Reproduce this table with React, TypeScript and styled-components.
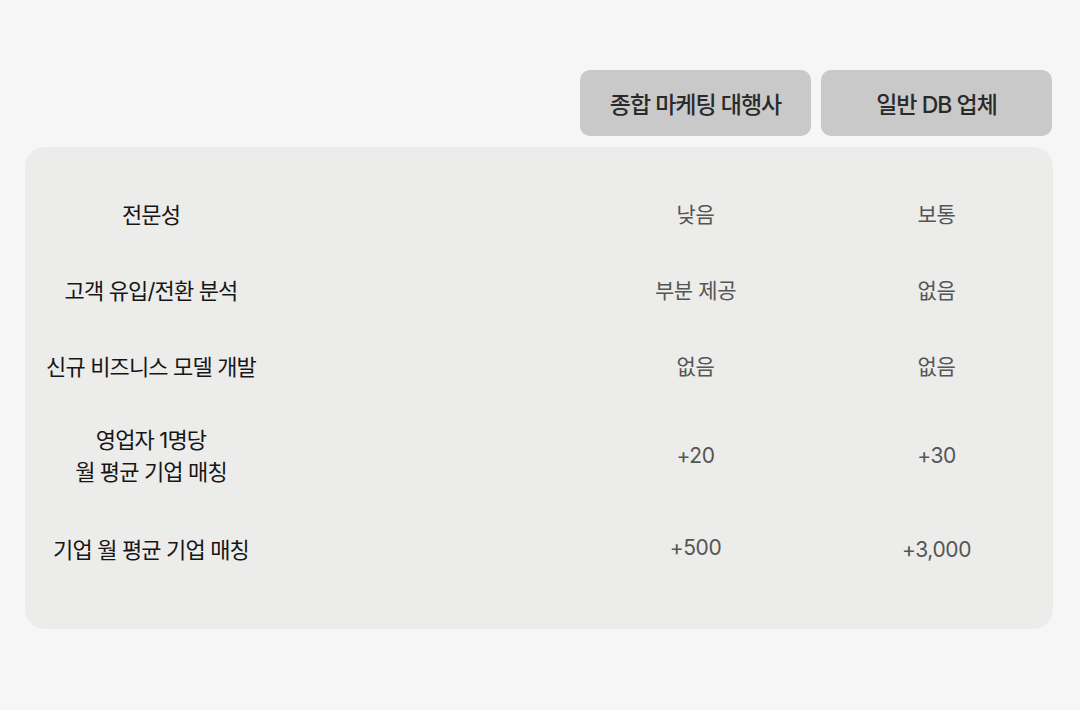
import styled, { createGlobalStyle } from "styled-components";

const GlobalStyle = createGlobalStyle`
  html, body {
    margin: 0;
    padding: 0;
    background: #f6f6f6;
    font-family: Inter, "Noto Sans CJK KR", "Noto Sans", sans-serif;
  }
`;

const Page = styled.div`
  padding: 70px 27px 0 25px;
  display: flex;
  flex-direction: column;
  gap: 11px;
`;

// label | spacer | two 231px columns with a 10px gap between them
const Grid = styled.div`
  display: grid;
  grid-template-columns: 252px 1fr 241px 231px;
  padding-right: 1px;
  & > :nth-child(3) {
    margin-right: 10px;
  }
`;

const HeaderRow = styled(Grid)`
  height: 66px;
`;

const HeaderCell = styled.div`
  background: #c9c9c9;
  border-radius: 10px;
  display: flex;
  align-items: center;
  justify-content: center;
  font-size: 23px;
  font-weight: 500;
  letter-spacing: -1px;
  color: #2a2a2a;
`;

const Panel = styled.div`
  background: #ececeb;
  border-radius: 20px;
  padding: 30px 0 36px;
`;

const Row = styled(Grid)<{ $h: number }>`
  height: ${(p) => p.$h}px;
  align-items: center;
`;

const Label = styled.div`
  text-align: center;
  font-size: 22px;
  line-height: 32px;
  color: #161616;
  letter-spacing: -0.85px;
`;

const Value = styled.div<{ $shift?: number }>`
  text-align: center;
  font-size: 21px;
  line-height: 32px;
  color: #555;
  letter-spacing: -0.4px;
  transform: translateY(${(p) => p.$shift ?? 0}px);
`;

const rows = [
  { label: ["전문성"], a: "낮음", b: "보통", h: 76 },
  { label: ["고객 유입/전환 분석"], a: "부분 제공", b: "없음", h: 76 },
  { label: ["신규 비즈니스 모델 개발"], a: "없음", b: "없음", h: 76 },
  { label: ["영업자 1명당", "월 평균 기업 매칭"], a: "+20", b: "+30", h: 102 },
  { label: ["기업 월 평균 기업 매칭"], a: "+500", b: "+3,000", h: 86, shift: -2 },
];

export default function App() {
  return (
    <>
      <GlobalStyle />
      <Page>
        <HeaderRow>
          <div />
          <div />
          <HeaderCell>종합 마케팅 대행사</HeaderCell>
          <HeaderCell>일반 DB 업체</HeaderCell>
        </HeaderRow>
        <Panel>
          {rows.map((r) => (
            <Row $h={r.h} key={r.label.join()}>
              <Label>
                {r.label.map((l) => (
                  <div key={l}>{l}</div>
                ))}
              </Label>
              <div />
              <Value $shift={r.shift}>{r.a}</Value>
              <Value>{r.b}</Value>
            </Row>
          ))}
        </Panel>
      </Page>
    </>
  );
}
